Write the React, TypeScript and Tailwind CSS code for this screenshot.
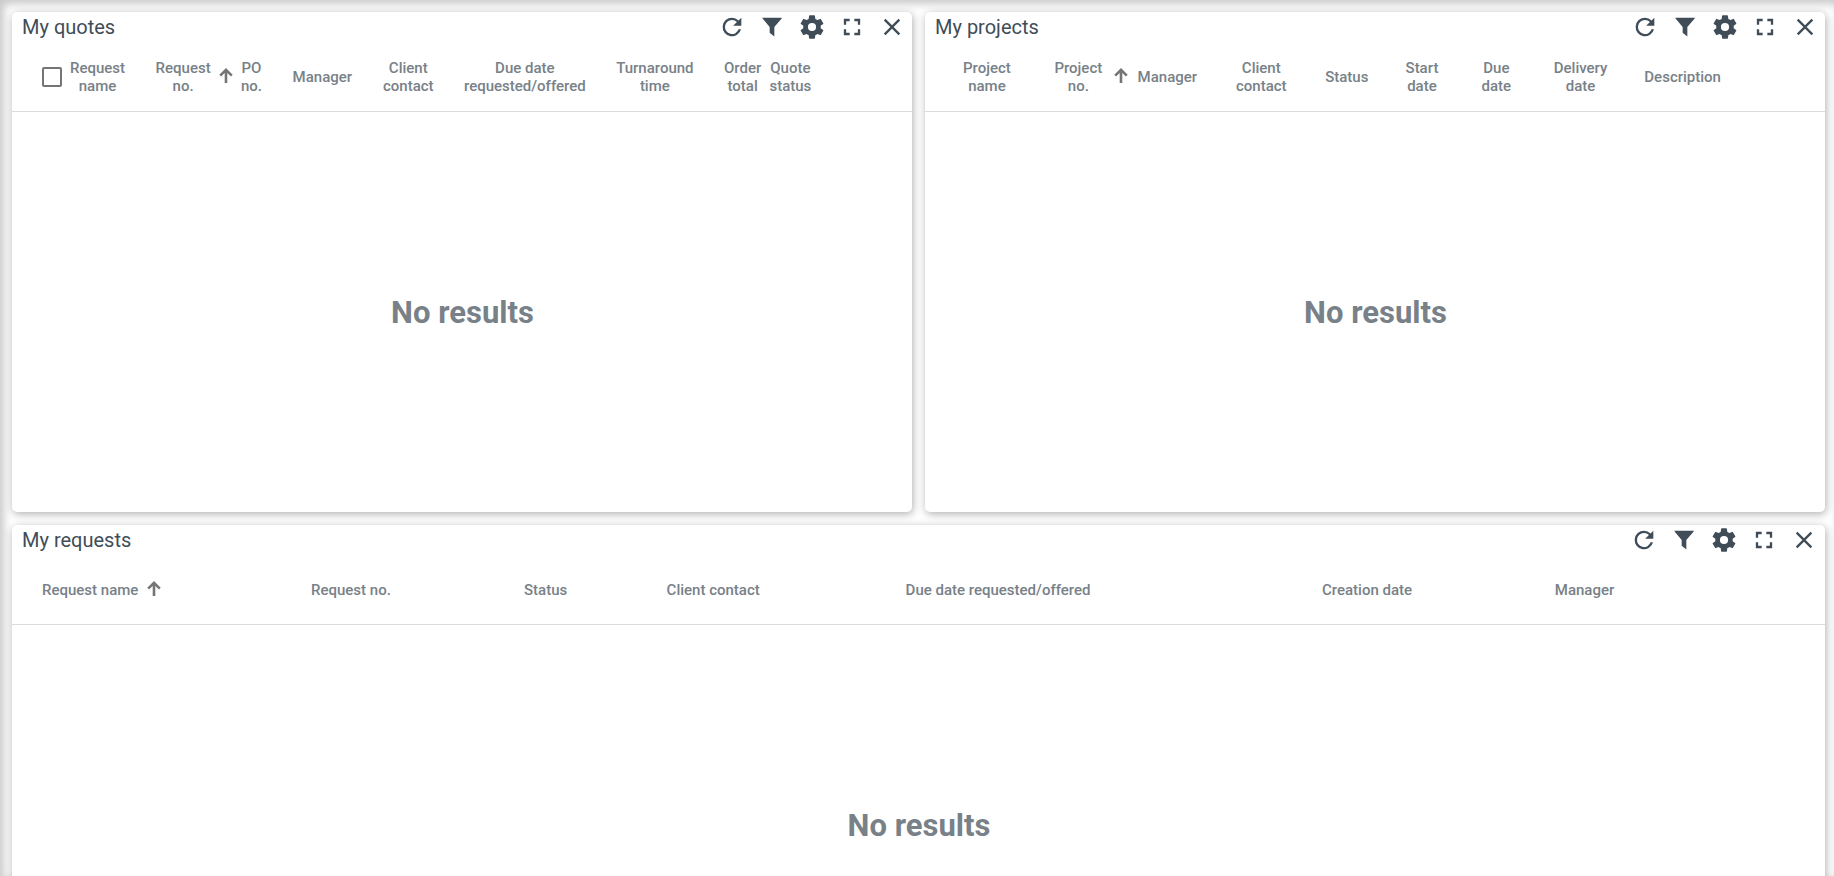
import React from "react";

type Col = { lines: string[]; width: string; sorted?: string; check?: boolean };

const Icon = ({ d }: { d: string }) => (
  <svg viewBox="0 0 24 24" className="size-7 shrink-0 fill-current">
    <path d={d} />
  </svg>
);

const REFRESH =
  "M17.65 6.35A7.96 7.96 0 0 0 12 4a8 8 0 1 0 7.73 10h-2.08A6 6 0 1 1 12 6c1.66 0 3.14.69 4.22 1.78L13 11h7V4l-2.35 2.35z";
const FILTER = "M3.9 4h16.4v.7L14 12v8.1l-4-3.1v-5L3.9 4.7z";
const GEAR =
  "M12 15.5A3.5 3.5 0 0 1 8.5 12 3.5 3.5 0 0 1 12 8.5a3.5 3.5 0 0 1 3.5 3.5 3.5 3.5 0 0 1-3.5 3.5m7.43-2.53c.04-.32.07-.64.07-.97s-.03-.66-.07-1l2.11-1.63c.19-.15.24-.42.12-.64l-2-3.46c-.12-.22-.39-.31-.61-.22l-2.49 1c-.52-.39-1.06-.73-1.69-.98l-.37-2.65A.506.506 0 0 0 14 2h-4c-.25 0-.46.18-.5.42l-.37 2.65c-.63.25-1.17.59-1.69.98l-2.49-1c-.22-.09-.49 0-.61.22l-2 3.46c-.13.22-.07.49.12.64L4.57 11c-.04.34-.07.67-.07 1s.03.65.07.97l-2.11 1.66c-.19.15-.25.42-.12.64l2 3.46c.12.22.39.3.61.22l2.49-1.01c.52.4 1.06.74 1.69.99l.37 2.65c.04.24.25.42.5.42h4c.25 0 .46-.18.5-.42l.37-2.65c.63-.26 1.17-.59 1.69-.99l2.49 1.01c.22.08.49 0 .61-.22l2-3.46c.12-.22.07-.49-.12-.64l-2.11-1.66z";
const FULL = "M7 14H5v5h5v-2H7v-3zm-2-4h2V7h3V5H5v5zm12 7h-3v2h5v-5h-2v3zM14 5v2h3v3h2V5h-5z";
const CLOSE =
  "M19 6.41 17.59 5 12 10.59 6.41 5 5 6.41 10.59 12 5 17.59 6.41 19 12 13.41 17.59 19 19 17.59 13.41 12z";

type PanelProps = { title: string; cols: Col[]; start: string; end?: string; className: string };

function Panel({ title, cols, start, end = "pr-1.5", className }: PanelProps) {
  return (
    <section
      className={`flex h-[500px] shrink-0 flex-col rounded-[5px] bg-white shadow-[1px_2px_8px_rgba(0,0,0,0.32)] ${className}`}
    >
      <header className={`flex h-[30px] shrink-0 items-center justify-between pl-2.5 ${end}`}>
        <h2 className="text-[20px] leading-[30px] text-[#404d58]">{title}</h2>
        <div className="flex items-center gap-3 text-[#404d58]">
          <Icon d={REFRESH} />
          <Icon d={FILTER} />
          <Icon d={GEAR} />
          <Icon d={FULL} />
          <Icon d={CLOSE} />
        </div>
      </header>
      <div className={`flex h-[70px] shrink-0 items-center border-b border-[#dcdcdc] ${start}`}>
        {cols.map((c, i) => (
          <div key={i} className={`flex shrink-0 items-center ${c.width}`}>
            {c.check && <span className="mr-2 size-5 shrink-0 rounded-[2px] border-2 border-[#757575]" />}
            <span className="text-center text-[15px] leading-[18px] font-medium whitespace-nowrap text-[#788188]">
              {c.lines.map((l) => (
                <span key={l} className="block">
                  {l}
                </span>
              ))}
            </span>
            {c.sorted && (
              <svg
                viewBox="0 0 14 16"
                className={`mb-0.5 h-4 w-3.5 shrink-0 fill-none stroke-[#757575] ${c.sorted}`}
                strokeWidth="2.6"
              >
                <path d="M7 15V2.5M1.2 7.6 7 1.9l5.8 5.7" />
              </svg>
            )}
          </div>
        ))}
      </div>
      <div className="flex h-[402px] shrink-0 items-center justify-center pl-px text-[31px] leading-10 font-bold text-[#788188]">
        No results
      </div>
    </section>
  );
}

const quotes: Col[] = [
  { lines: ["Request", "name"], width: "w-[113.6px]", check: true },
  { lines: ["Request", "no."], width: "w-[85.4px]", sorted: "ml-[8px]" },
  { lines: ["PO", "no."], width: "w-[51.6px]" },
  { lines: ["Manager"], width: "w-[90.4px]" },
  { lines: ["Client", "contact"], width: "w-[81px]" },
  { lines: ["Due date", "requested/offered"], width: "w-[152.2px]" },
  { lines: ["Turnaround", "time"], width: "w-[107.8px]" },
  { lines: ["Order", "total"], width: "w-[45.5px]" },
  { lines: ["Quote", "status"], width: "w-[60px]" },
];
const projects: Col[] = [
  { lines: ["Project", "name"], width: "w-[91.4px]" },
  { lines: ["Project", "no."], width: "w-[83.2px]", sorted: "ml-[12px]" },
  { lines: ["Manager"], width: "w-[98.4px]" },
  { lines: ["Client", "contact"], width: "w-[89.2px]" },
  { lines: ["Status"], width: "w-[80.4px]" },
  { lines: ["Start", "date"], width: "w-[76px]" },
  { lines: ["Due", "date"], width: "w-[72.2px]" },
  { lines: ["Delivery", "date"], width: "w-[90.6px]" },
  { lines: ["Description"], width: "w-[90px]" },
];
const requests: Col[] = [
  { lines: ["Request name"], width: "w-[269px]", sorted: "ml-[8.5px]" },
  { lines: ["Request no."], width: "w-[213px]" },
  { lines: ["Status"], width: "w-[142.6px]" },
  { lines: ["Client contact"], width: "w-[239px]" },
  { lines: ["Due date requested/offered"], width: "w-[416.4px]" },
  { lines: ["Creation date"], width: "w-[232.8px]" },
  { lines: ["Manager"], width: "w-[90px]" },
];

export default function App() {
  return (
    <main className="flex h-[876px] w-[1834px] flex-col gap-[13px] overflow-hidden bg-white pt-3 pl-3 font-[Roboto,sans-serif] shadow-[inset_4px_4px_8px_rgba(0,0,0,0.22)]">
      <div className="flex shrink-0 gap-[13px]">
        <Panel title="My quotes" cols={quotes} start="pl-[30px]" className="w-[900px]" />
        <Panel title="My projects" cols={projects} start="pl-[38px]" className="w-[900px]" />
      </div>
      <Panel title="My requests" cols={requests} start="pl-[30px]" end="pr-[7px]" className="w-[1813px]" />
    </main>
  );
}
